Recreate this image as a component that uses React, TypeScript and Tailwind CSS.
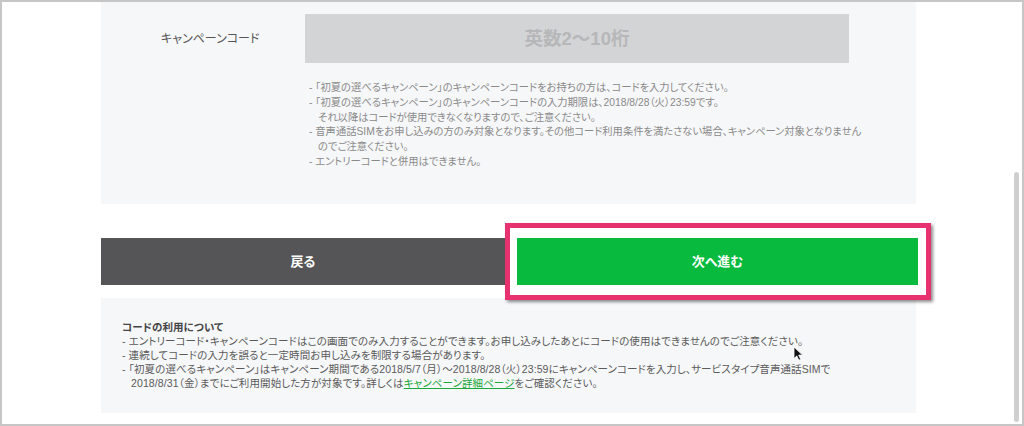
import React from 'react';

const jp = "[font-family:'Liberation_Sans','Noto_Sans_CJK_JP',sans-serif] [font-feature-settings:'palt']";

const topNotes: { text: string; cont?: boolean }[] = [
  { text: '- 「初夏の選べるキャンペーン」のキャンペーンコードをお持ちの方は、コードを入力してください。' },
  { text: '- 「初夏の選べるキャンペーン」のキャンペーンコードの入力期限は、2018/8/28（火）23:59です。' },
  { text: 'それ以降はコードが使用できなくなりますので、ご注意ください。', cont: true },
  { text: '- 音声通話SIMをお申し込みの方のみ対象となります。その他コード利用条件を満たさない場合、キャンペーン対象となりません' },
  { text: 'のでご注意ください。', cont: true },
  { text: '- エントリーコードと併用はできません。' },
];

function Cursor() {
  return (
    <svg className="absolute left-[791px] top-[344px] h-[15px] w-[11px]" viewBox="0 0 11 15">
      <path d="M1 1v11.5l2.8-2.6 2 4.3 1.9-.9-2-4.2H9.6z" fill="#111" stroke="#fff" strokeWidth={0.8} />
    </svg>
  );
}

export default function App() {
  return (
    <div className={`relative h-[426px] w-[1024px] overflow-hidden border-2 border-[#c6c6c6] bg-white pl-[99px] ${jp}`}>
      {/* campaign code panel */}
      <div className="w-[815px] bg-[#f6f7f9] pb-[34px]">
        <div className="flex items-center pt-[12px]">
          <div className="w-[204px] pl-[60px] text-[12px] text-[#555]">キャンペーンコード</div>
          <div className="flex h-[49px] w-[544px] items-center justify-center bg-[#d3d4d6] text-[18.5px] font-bold text-[#b6b7b9]">
            英数2〜10桁
          </div>
        </div>
        <div className="ml-[208px] mt-[18px] text-[10.3px] leading-[14.8px] text-[#8a8a8a]">
          {topNotes.map((n, i) => (
            <div key={i} className={n.cont ? 'pl-[9px]' : ''}>
              {n.text}
            </div>
          ))}
        </div>
      </div>

      {/* buttons */}
      <div className="mt-[34px] flex h-[47px]">
        <button className="flex w-[404px] items-center justify-center bg-[#555557] text-[13px] font-bold text-white">
          戻る
        </button>
        <div className="relative ml-[12px] w-[401px]">
          <button className="flex h-full w-full items-center justify-center bg-[#08bb3e] text-[13px] font-bold text-white">
            次へ進む
          </button>
          <div className="pointer-events-none absolute -left-[12px] -top-[15px] h-[77px] w-[426px] border-[5px] border-[#e8326f] shadow-[2px_2px_3px_rgba(0,0,0,0.45)]" />
        </div>
      </div>

      {/* usage notes */}
      <div className="mt-[13px] h-[115px] w-[815px] bg-[#f6f7f9] pl-[21px] pt-[22px] text-[10.5px] leading-[14px] tracking-[0.1px] text-[#5a5a5a]">
        <div className="font-bold text-[#444]">コードの利用について</div>
        <div>- エントリーコード・キャンペーンコードはこの画面でのみ入力することができます。お申し込みしたあとにコードの使用はできませんのでご注意ください。</div>
        <div>- 連続してコードの入力を誤ると一定時間お申し込みを制限する場合があります。</div>
        <div>- 「初夏の選べるキャンペーン」はキャンペーン期間である2018/5/7（月）〜2018/8/28（火）23:59にキャンペーンコードを入力し、サービスタイプ音声通話SIMで</div>
        <div className="pl-[9px]">
          2018/8/31（金）までにご利用開始した方が対象です。詳しくは
          <a href="#" className="text-[#1aa83a] underline">キャンペーン詳細ページ</a>
          をご確認ください。
        </div>
      </div>

      <div className="absolute right-[3px] top-[170px] h-[250px] w-[5px] rounded-full bg-[#cfcfcf]" />
      <Cursor />
    </div>
  );
}
